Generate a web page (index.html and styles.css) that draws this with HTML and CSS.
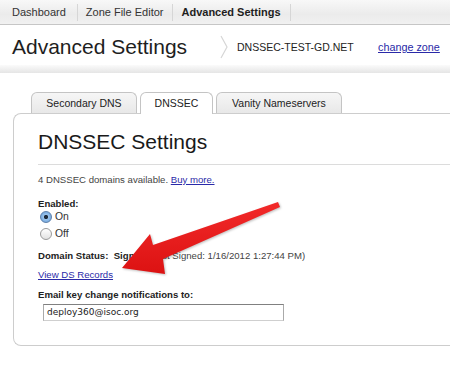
FILE: index.html
```html
<!DOCTYPE html>
<html lang="en">
<head>
  <meta charset="UTF-8">
  <meta name="viewport" content="width=device-width, initial-scale=1.0">
  <title>Advanced Settings</title>

  <link rel="stylesheet" href="styles.css">

</head>
<body>

  <!-- 상단 메뉴 -->
  <div class="topnav">
    <a class="nav-item">Dashboard</a>
    <a class="nav-item">Zone File Editor</a>
    <a class="nav-item active">Advanced Settings</a>
  </div>

  <!-- 페이지 제목 -->
  <div class="page-header">
    <h1 class="page-title">Advanced Settings</h1>
    <svg class="chevron" width="8" height="24" viewBox="0 0 8 24">
      <polyline points="1,1 7,12 1,23" fill="none" stroke="#d6d6d6" stroke-width="1.2"/>
    </svg>
    <span class="zone-name">DNSSEC-TEST-GD.NET</span>
    <a class="change-zone" href="#">change zone</a>
  </div>
  <div class="header-band"></div>

  <div class="content">
    <div class="tabs">
      <div class="tab tab-1">Secondary DNS</div>
      <div class="tab tab-2 active">DNSSEC</div>
      <div class="tab tab-3">Vanity Nameservers</div>
    </div>

    <div class="panel">
      <h2 class="panel-title">DNSSEC Settings</h2>

      <p class="line avail">4 DNSSEC domains available. <a href="#">Buy more.</a></p>

      <p class="line label enabled">Enabled:</p>
      <div class="radio-row">
        <span class="radio on"></span>
        <span>On</span>
      </div>
      <div class="radio-row">
        <span class="radio"></span>
        <span>Off</span>
      </div>

      <p class="line status"><b>Domain Status:</b>&nbsp; <b>Signed</b> (Last Signed: 1/16/2012 1:27:44 PM)</p>

      <p class="line records"><a href="#">View DS Records</a></p>

      <p class="line label email-label">Email key change notifications to:</p>
      <div class="email-box">deploy360@isoc.org</div>
    </div>
  </div>

  <!-- 빨간 화살표 (스크린샷 위에 덧그린 것) -->
  <svg class="arrow" width="450" height="368" viewBox="0 0 450 368">
    <defs>
      <linearGradient id="red" x1="0" y1="0" x2="0" y2="1">
        <stop offset="0" stop-color="#f22a2a"/>
        <stop offset="1" stop-color="#dc1212"/>
      </linearGradient>
    </defs>
    <polygon points="122,268 150,234 153,245 278,202 280,207 163,259 165,274" fill="url(#red)"/>
  </svg>

</body>
</html>
```

FILE: styles.css
```css
html, body {
  margin: 0;
  padding: 0;
}

body {
  position: relative;
  width: 450px;
  height: 368px;
  overflow: hidden;
  background-color: #fff;
  font-family: "Liberation Sans", Arial, sans-serif;
  color: #333;
}

a {
  color: #2a2aa8;
}

/* 상단 메뉴 */
.topnav {
  display: flex;
  align-items: center;
  height: 24px;
  background: linear-gradient(#f8f8f8, #ebebeb 60%, #f1f1f1);
  border-bottom: 1px solid #c6c6c6;
  font-size: 11px;
}

.nav-item {
  display: flex;
  align-items: center;
  height: 17px;
  padding: 0 9px 0 8px;
  border-right: 1px solid #d6d6d6;
  color: #333;
  text-decoration: none;
}

.nav-item:first-child {
  padding-left: 12px;
  padding-right: 11px;
}

.nav-item.active {
  font-weight: bold;
  color: #1e1e1e;
}

/* 페이지 제목 */
.page-header {
  display: flex;
  align-items: center;
  height: 36px;
  padding: 4px 0 0 12px;
}

.page-title {
  margin: 0;
  font-size: 21px;
  font-weight: normal;
  color: #1e1e1e;
  width: 208px;
}

.chevron {
  margin-right: 9px;
}

.zone-name {
  font-size: 10.5px;
  color: #222;
  width: 141px;
}

.change-zone {
  font-size: 10.8px;
}

.header-band {
  height: 8px;
  background: linear-gradient(#fbfbfb, #e5e5e5);
}

/* 탭 + 패널 */
.content {
  padding-top: 19px;
}

.tabs {
  display: flex;
  gap: 3px;
  margin-left: 31px;
  margin-bottom: -1px;
}

.tab {
  position: relative;
  height: 20px;
  line-height: 20px;
  border: 1px solid #c4c4c4;
  border-bottom: none;
  border-radius: 6px 6px 0 0;
  background: linear-gradient(#f6f6f6, #e8e8e8);
  text-align: center;
  font-size: 10.5px;
  color: #222;
}

.tab.active {
  z-index: 1;
  height: 21px;
  background: #fff;
}

.tab-1 { width: 104px; }
.tab-2 { width: 71px; }
.tab-3 { width: 124px; }

/* 패널은 오른쪽 화면 밖으로 이어지는 모양 -> 오른쪽 테두리 없음 */
.panel {
  margin-left: 13px;
  padding: 16px 0 24px 24px;
  border: 1px solid #cdcdcd;
  border-right: none;
  border-radius: 8px 0 0 8px;
  font-size: 9.6px;
}

.panel-title {
  margin: 0;
  padding-bottom: 10px;
  border-bottom: 1px solid #dcdcdc;
  font-size: 21px;
  line-height: 24px;
  font-weight: normal;
  color: #1a1a1a;
}

.line {
  margin: 0;
  line-height: 12px;
  color: #444;
}

.avail {
  margin-top: 9px;
}

.label {
  font-weight: bold;
  color: #222;
}

.enabled {
  margin-top: 12px;
  margin-bottom: -2px;
}

.radio-row {
  display: flex;
  align-items: center;
  gap: 3px;
  height: 17px;
  padding-left: 2px;
  font-size: 10.4px;
  color: #333;
}

.radio {
  box-sizing: border-box;
  width: 12px;
  height: 12px;
  border-radius: 50%;
  border: 1px solid #9a9a9a;
  background: linear-gradient(#ffffff, #e2e2e2);
}

.radio.on {
  border-color: #5d80ab;
  background: radial-gradient(circle, #1d2a3a 0, #1d2a3a 1.8px, #9cc4ec 2.4px, #5d98d6 100%);
}

.status {
  margin-top: 8px;
}

.status b {
  color: #222;
}

.records {
  margin-top: 7px;
}

.email-label {
  margin-top: 8px;
}

.email-box {
  box-sizing: border-box;
  width: 241px;
  height: 17px;
  margin: 3px 0 0 5px;
  padding-left: 3px;
  border: 1px solid #aaa;
  border-top-color: #808080;
  border-bottom-color: #cfcfcf;
  font-family: "DejaVu Sans", sans-serif;
  font-size: 9px;
  line-height: 15px;
  color: #222;
}

/* 화살표 */
.arrow {
  position: absolute;
  top: 0;
  left: 0;
  pointer-events: none;
  filter: drop-shadow(1px 1px 1px rgba(0, 0, 0, 0.25));
}
```
